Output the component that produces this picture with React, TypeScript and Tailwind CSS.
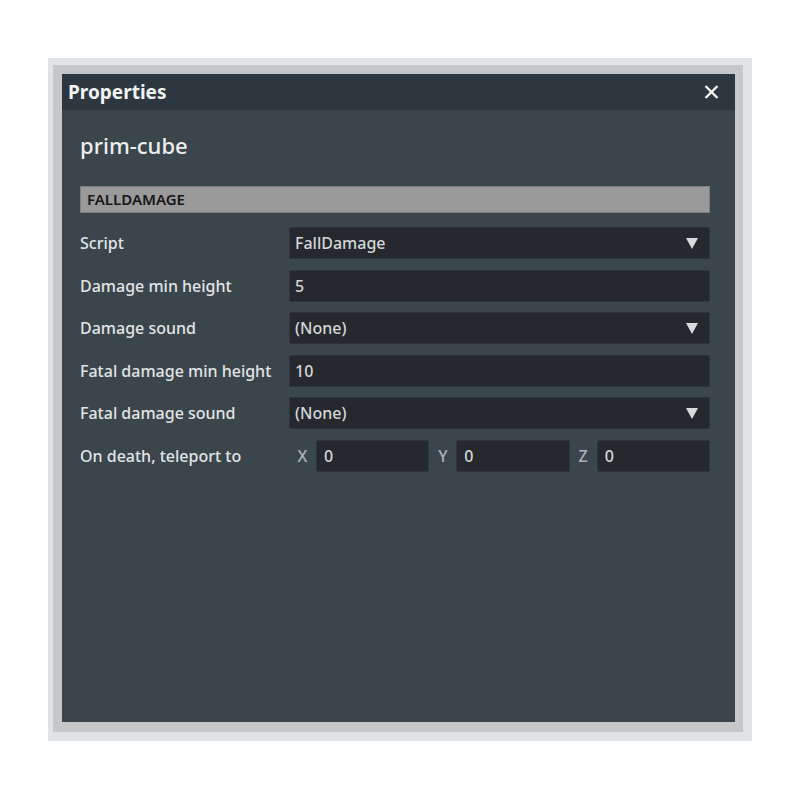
import React from "react";

const font = { fontFamily: '"Noto Sans", "Open Sans", sans-serif' };

function Arrow() {
  return (
    <svg width="12" height="11" viewBox="0 0 12 11" className="shrink-0">
      <polygon points="0,0 12,0 6,11" fill="#d8dadc" />
    </svg>
  );
}

function Row({ label, children }: { label: string; children: React.ReactNode }) {
  return (
    <div className="flex items-center h-[32px]">
      <div className="w-[209px] shrink-0 text-[16px] font-medium text-[#e2e4e5]">{label}</div>
      <div className="flex-1 flex">{children}</div>
    </div>
  );
}

function Field({ value, dropdown }: { value: string; dropdown?: boolean }) {
  return (
    <div className="flex-1 h-[32px] bg-[#25292d] border border-[#2f353a] rounded-[2px] flex items-center pl-[5px] pr-[11px] text-[16px] font-medium text-[#d4d6d8]">
      <span className="flex-1">{value}</span>
      {dropdown && <Arrow />}
    </div>
  );
}

function Coord({ axis, value }: { axis: string; value: string }) {
  return (
    <div className="flex-1 flex items-center">
      <div className="w-[27px] text-center text-[16px] font-medium text-[#aeb3b7]">{axis}</div>
      <div className="flex-1 h-[32px] bg-[#25292d] border border-[#2f353a] rounded-[2px] flex items-center pl-[7px] text-[16px] font-medium text-[#d4d6d8]">
        {value}
      </div>
    </div>
  );
}

export default function App() {
  return (
    <div className="w-[800px] h-[800px] bg-white pt-[58px] pl-[48px]" style={font}>
      <div className="w-[704px] h-[683px] bg-[#e1e4e7] pt-[7px] pl-[5px] pr-[9px] pb-[9px] flex">
        <div className="flex-1 bg-[#c5c7c9] pt-[9px] pl-[9px] pr-[8px] pb-[10px] flex">
          <div className="flex-1 flex flex-col bg-[#3a454c]">
            <div className="h-[36px] bg-[#2c373f] flex items-center pl-[6px] pr-[16px]">
              <div className="flex-1 text-[19px] font-bold text-[#f2f3f4] leading-none">Properties</div>
              <svg width="15" height="14" viewBox="0 0 15 14">
                <path d="M1.5 1 L13.5 13 M13.5 1 L1.5 13" stroke="#f2f3f4" strokeWidth="2.4" />
              </svg>
            </div>
            <div className="pl-[18px] pr-[25px] flex flex-col">
              <div className="h-[76px] flex items-center text-[22px] font-medium text-[#eceeef] pb-[6px]">prim-cube</div>
              <div className="h-[27px] bg-[#9a9a9a] border border-[#7c7f81] flex items-center pl-[6px] text-[15px] font-semibold text-[#161616]">
                FALLDAMAGE
              </div>
              <div className="flex flex-col gap-[10.6px] mt-[14px]">
                <Row label="Script">
                  <Field value="FallDamage" dropdown />
                </Row>
                <Row label="Damage min height">
                  <Field value="5" />
                </Row>
                <Row label="Damage sound">
                  <Field value="(None)" dropdown />
                </Row>
                <Row label="Fatal damage min height">
                  <Field value="10" />
                </Row>
                <Row label="Fatal damage sound">
                  <Field value="(None)" dropdown />
                </Row>
                <Row label="On death, teleport to">
                  <Coord axis="X" value="0" />
                  <Coord axis="Y" value="0" />
                  <Coord axis="Z" value="0" />
                </Row>
              </div>
            </div>
          </div>
        </div>
      </div>
    </div>
  );
}
